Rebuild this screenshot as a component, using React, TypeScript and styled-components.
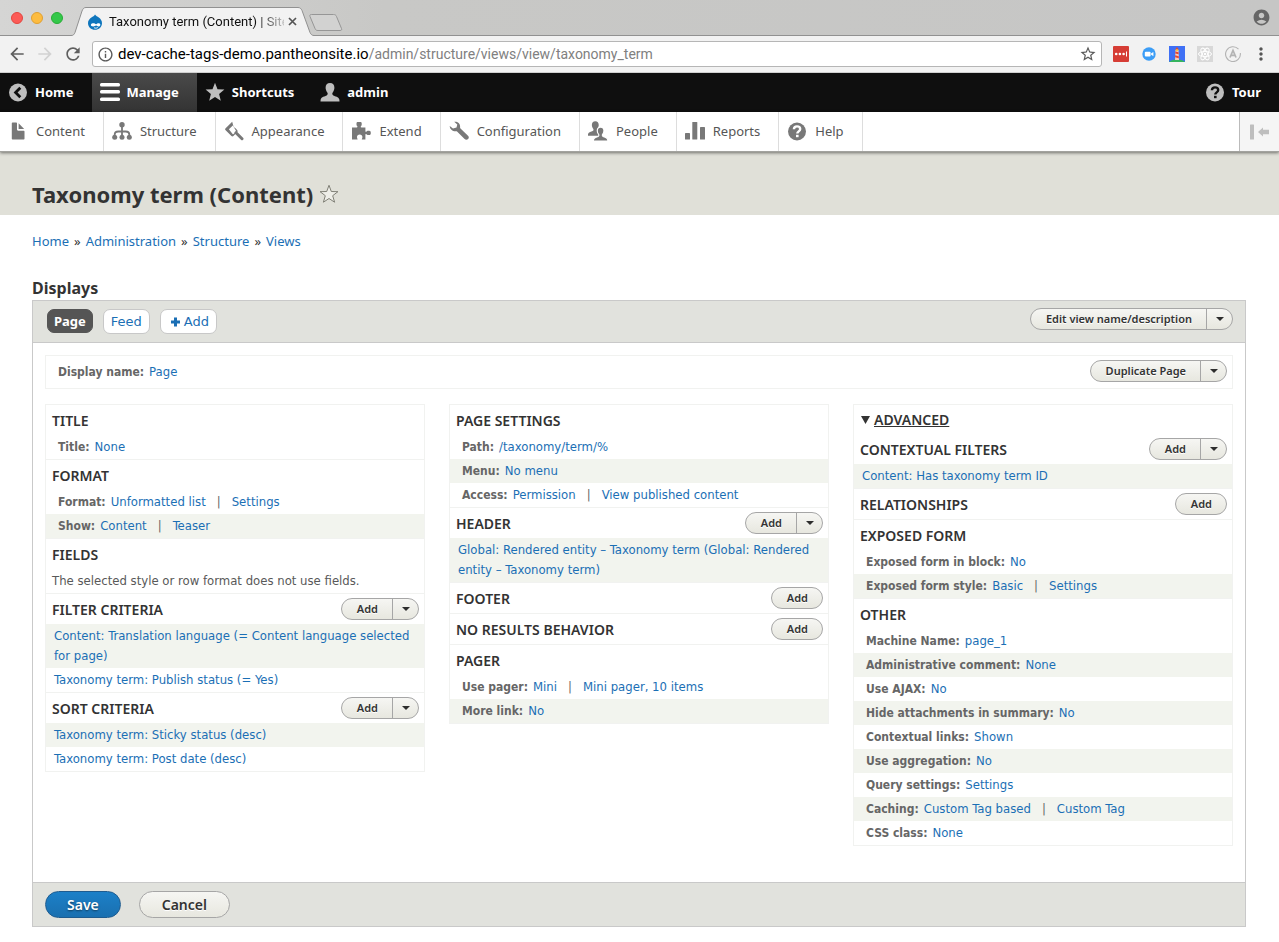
import React from 'react';
import styled, { createGlobalStyle, css } from 'styled-components';
import { MdArrowBack, MdArrowForward, MdRefresh, MdStarBorder, MdAccountCircle, MdMoreVert, MdInfoOutline } from 'react-icons/md';

const chromeFont = `Roboto, 'Liberation Sans', sans-serif`;
const uiFont = `'Noto Sans', 'Open Sans', sans-serif`;
const textFont = `'DejaVu Sans Condensed', 'DejaVu Sans', sans-serif`;
const wideFont = `'DejaVu Sans', sans-serif`;

const color = {
  link: '#1b6fb5',
  ink: '#333',
  label: '#666',
  bar: '#e1e2dd',
  line: '#c9c9c9',
  faint: '#f1f2f0',
  stripe: '#f2f4ee',
};

const GlobalStyle = createGlobalStyle`
  *, *::before, *::after { box-sizing: border-box; }
  body { margin: 0; background: #fff; color: ${color.ink}; font: 13px/20px ${textFont}; }
  a { color: ${color.link}; text-decoration: none; }
  button { font-family: inherit; cursor: pointer; }
  svg { display: block; flex: none; }
  h1, h2, h3, p, ul, ol { margin: 0; padding: 0; }
  ul, ol { list-style: none; }
`;

/* ---------- Browser frame ---------- */

const TabStrip = styled.div`
  display: flex;
  align-items: flex-end;
  height: 36px;
  padding: 0 10px 0 11px;
  background: linear-gradient(to right, #d5d5d4, #c8c8c6 30%, #c6c6c5);
  border-bottom: 1px solid #919191;
  font: 13px/16px ${chromeFont};
`;

const WindowDots = styled.div`
  display: flex;
  gap: 8px;
  align-self: center;
`;

const Dot = styled.span<{ $fill: string; $edge: string }>`
  width: 12px;
  height: 12px;
  border-radius: 50%;
  background: ${p => p.$fill};
  border: 1px solid ${p => p.$edge};
`;

const BrowserTab = styled.div`
  position: relative;
  display: flex;
  align-items: center;
  width: 244px;
  height: 29px;
  margin: 0 0 -1px 8px;
  padding: 0 14px 0 16px;
  color: #111;
`;

const TabShape = styled.svg`
  position: absolute;
  inset: 0;
`;

const TabTitle = styled.span`
  position: relative;
  flex: 1;
  margin-left: 6px;
  overflow: hidden;
  white-space: nowrap;
  mask-image: linear-gradient(to right, #000 148px, transparent 182px);
`;

const TabPart = styled.span`
  position: relative;
`;

const CloseTab = styled.button`
  position: relative;
  display: flex;
  padding: 4px;
  border: 0;
  background: none;
`;

const NewTab = styled.button`
  display: flex;
  margin: 0 auto 4px -6px;
  padding: 0;
  border: 0;
  background: none;
`;

const Profile = styled.button`
  align-self: center;
  display: flex;
  margin-right: -2px;
  padding: 0;
  border: 0;
  background: none;
  color: #666;
`;

const BrowserBar = styled.div`
  display: flex;
  align-items: center;
  height: 37px;
  padding: 0 4px 0 7px;
  background: #f2f2f2;
  border-bottom: 1px solid #cfcfcf;
`;

const NavButton = styled.button`
  display: flex;
  width: 28px;
  padding: 0;
  border: 0;
  background: none;
  color: #5f5f5f;
  &:disabled { color: #d2d2d2; }
`;

const Omnibox = styled.div`
  display: flex;
  flex: 1;
  align-items: center;
  gap: 4px;
  height: 26px;
  margin: 0 5px 0 1px;
  padding: 0 4px;
  border: 1px solid #b6b6b6;
  border-radius: 3px;
  background: #fff;
  color: #5a5a5a;
`;

const Address = styled.div`
  flex: 1;
  font: 14px/20px ${chromeFont};
  color: #808080;
  white-space: nowrap;
  b { font-size: 15px; font-weight: 400; color: #000; }
`;

const Extension = styled.button`
  display: flex;
  justify-content: center;
  width: 28px;
  padding: 0;
  border: 0;
  background: none;
  color: #555;
`;

/* ---------- Admin toolbar ---------- */

const AdminBar = styled.nav`
  display: flex;
  height: 39px;
  background: #0f0f0f;
`;

const BarLink = styled.a<{ $active?: boolean; $end?: boolean }>`
  display: flex;
  align-items: center;
  gap: 7px;
  padding: 0 18px 2px 8px;
  color: #fff;
  font: 700 13px/18px ${uiFont};
  ${p => p.$active && css`background: linear-gradient(#4a4a4a, #333);`}
  ${p => p.$end && css`margin-left: auto;`}
`;

const Tray = styled.nav`
  position: relative;
  display: flex;
  height: 40px;
  background: #fff;
  border-bottom: 1px solid #a2a29e;
  box-shadow: 0 1px 3px rgba(0, 0, 0, 0.5);
`;

const TrayLink = styled.a`
  display: flex;
  align-items: center;
  gap: 8px;
  padding: 0 18px 1px 8px;
  border-right: 1px solid #ddd;
  color: #565656;
  font: 13px/18px ${uiFont};
`;

const TrayToggle = styled.button`
  display: flex;
  align-items: center;
  justify-content: center;
  width: 40px;
  margin-left: auto;
  padding: 0;
  border: 0;
  border-left: 1px solid #bbb;
  background: #f5f5f5;
`;

/* ---------- Page ---------- */

const PageHeader = styled.header`
  display: flex;
  align-items: center;
  gap: 6px;
  height: 63px;
  padding: 20px 32px 0;
  background: #e0e0d8;
`;

const PageTitle = styled.h1`
  font: 700 22px/30px ${uiFont};
`;

const StarButton = styled.button`
  display: flex;
  padding: 0;
  border: 0;
  background: none;
`;

const Content = styled.main`
  padding: 16px 33px 15px 32px;
`;

const Breadcrumb = styled.nav`
  font: 13px/20px ${uiFont};
  ol { display: flex; }
  li + li::before { content: '»'; margin: 0 5px; }
`;

const DisplaysTitle = styled.h2`
  margin-top: 26px;
  font: 700 16px/23px ${uiFont};
`;

const Panel = styled.section`
  border: 1px solid ${color.line};
`;

const PanelBar = styled.div`
  display: flex;
  align-items: flex-start;
  gap: 10px;
  padding: 7px 12px 8px 14px;
  background: ${color.bar};
  border-bottom: 1px solid ${color.line};
`;

const DisplayTab = styled.a<{ $active?: boolean }>`
  display: flex;
  align-items: center;
  gap: 3px;
  margin-top: 1px;
  padding: 2px 7px 1px;
  border: 1px solid #c8c8c8;
  border-radius: 7px;
  background: #fff;
  font: 13px/20px ${wideFont};
  ${p => p.$active && css`
    padding: 1px 6px;
    border-color: #555;
    background: #555;
    color: #fff;
    font: 700 13px/20px ${uiFont};
  `}
`;

const PanelBody = styled.div`
  padding: 12px 12px 36px;
`;

const DisplayName = styled.div`
  display: flex;
  justify-content: space-between;
  align-items: flex-start;
  margin-bottom: 15px;
  padding: 4px 5px 6px 12px;
  border: 1px solid ${color.faint};
`;

const DisplayLabel = styled.div`
  padding-top: 2px;
`;

const Columns = styled.div`
  display: grid;
  grid-template-columns: repeat(3, 1fr);
  align-items: start;
  gap: 24px;
`;

const Column = styled.div`
  border: 1px solid ${color.faint};
`;

const Bucket = styled.section`
  & + & { border-top: 1px solid ${color.faint}; }
`;

const BucketHead = styled.div`
  display: flex;
  justify-content: space-between;
  align-items: flex-start;
  height: 30px;
  padding: 4px 5px 0 6px;
`;

const BucketTitle = styled.h3`
  padding-top: 2px;
  font: 600 14px/20px ${uiFont};
  text-transform: uppercase;
`;

const Line = styled.li<{ $striped?: boolean; $list?: boolean }>`
  padding: 2px 12px;
  ${p => p.$list && css`padding: 2px 8px;`}
  ${p => p.$striped && css`background: ${color.stripe};`}
`;

const Label = styled.span`
  margin-right: 5px;
  color: ${color.label};
  font: 700 12px/20px ${textFont};
`;

const Separator = styled.span`
  margin: 0 11px;
  color: ${color.label};
`;

const Note = styled.p`
  padding: 2px 6px;
  color: #595959;
`;

const Advanced = styled.details``;

const AdvancedTitle = styled.summary`
  display: flex;
  align-items: center;
  gap: 4px;
  height: 29px;
  padding: 1px 7px 0;
  list-style: none;
  cursor: pointer;
  font: 600 14px/20px ${uiFont};
  text-transform: uppercase;
  &::-webkit-details-marker { display: none; }
  span { text-decoration: underline; }
`;

/* ---------- Buttons ---------- */

const SplitButton = styled.div<{ $end?: boolean }>`
  display: flex;
  height: 22px;
  border: 1px solid #a6a6a6;
  border-radius: 11px;
  background: linear-gradient(#f6f6f3, #e7e7df);
  overflow: hidden;
  ${p => p.$end && css`margin-left: auto;`}
`;

const SplitMain = styled.button`
  padding: 0 14px 0 15px;
  border: 0;
  background: none;
  color: ${color.ink};
  font: 600 11px/20px ${uiFont};
  text-shadow: 0 1px #fff;
`;

const SplitMore = styled.button`
  display: flex;
  align-items: center;
  justify-content: center;
  width: 26px;
  padding: 0;
  border: 0;
  border-left: 1px solid #a6a6a6;
  background: none;
`;

const Actions = styled.div`
  display: flex;
  gap: 18px;
  padding: 8px 12px;
  background: ${color.bar};
  border-top: 1px solid ${color.line};
`;

const ActionButton = styled.button<{ $primary?: boolean }>`
  height: 27px;
  padding: 0 22px;
  border: 1px solid #a6a6a6;
  border-radius: 14px;
  background: linear-gradient(#f6f6f3, #e7e7df);
  color: ${color.ink};
  font: 600 14px/24px ${uiFont};
  text-shadow: 0 1px #fff;
  ${p => p.$primary && css`
    padding: 0 21px;
    border-color: #1e5c90;
    background: linear-gradient(#1c80c8, #1a70b0);
    color: #fff;
    text-shadow: 0 1px 2px rgba(0, 0, 0, 0.5);
  `}
`;

/* ---------- Icons ---------- */

const DrupalIcon = () => (
  <svg width="16" height="16" viewBox="0 0 16 16">
    <path d="M8 .5c1.200 1.600 2.300 1.900 3.800 3.100C13.600 5 15 6.700 15 9.200c0 3.800-3.100 6.500-7 6.500s-7-2.700-7-6.500C1 6.700 2.500 5 4.400 3.600 6 2.500 7.200 2 8 .5z" fill="#0f76bd" />
    <path d="M5.600 9.300c1.500-.3 2.500.5 3.500 1 .8-.6 1.700-1.200 2.800-1.100 1.300.1 1.700 1.200 1.300 2.300-.4 1-1.500 1.300-2.500.8-.6-.3-1.100-.7-1.600-.7-.8 0-1.600.9-2.900.9-1.500 0-2.400-.7-2.300-1.700.1-.8.800-1.300 1.700-1.500z" fill="#fff" />
    <path d="M7 13.700c1.100.7 2.700.6 3.800-.2" stroke="#fff" strokeWidth=".9" fill="none" />
  </svg>
);

const HomeIcon = () => (
  <svg width="20" height="20" viewBox="0 0 20 20">
    <circle cx="10" cy="10.500" r="9" fill="#bebebe" />
    <path d="M12.300 5.800 7.600 10.500l4.700 4.700" fill="none" stroke="#0f0f0f" strokeWidth="2.800" />
  </svg>
);

const MenuIcon = () => (
  <svg width="20" height="20" viewBox="0 0 20 20" fill="#fff">
    <rect y="1" width="20" height="3.600" rx="1.500" />
    <rect y="8" width="20" height="3.600" rx="1.500" />
    <rect y="15.500" width="20" height="3.600" rx="1.500" />
  </svg>
);

const StarIcon = () => (
  <svg width="20" height="20" viewBox="0 0 20 20">
    <path d="M10 .8l2.500 6.400 6.900.4-5.300 4.400 1.700 6.800L10 15l-5.800 3.800L5.900 12 .6 7.600l6.900-.4z" fill="#bebebe" />
  </svg>
);

const PersonShape = 'M10 1c2.900 0 4.400 2 4.400 4.700 0 1.900-.8 3.500-1.700 4.800-.7 1-.5 2.300.6 2.900 1.900 1 5.300 1.300 5.900 3.700.2.800.3 1.600.3 2.400H.5c0-.8.1-1.600.3-2.400.6-2.400 4-2.700 5.900-3.700 1.100-.6 1.300-1.900.6-2.900-.9-1.300-1.700-2.900-1.700-4.800C5.600 3 7.100 1 10 1z';

const PersonIcon = () => (
  <svg width="20" height="20" viewBox="0 0 20 20"><path d={PersonShape} fill="#bebebe" /></svg>
);

const HelpIcon = ({ fill, mark }: { fill: string; mark: string }) => (
  <svg width="20" height="20" viewBox="0 0 20 20">
    <circle cx="10" cy="10.500" r="9" fill={fill} />
    <path d="M6.900 8.300c.1-1.900 1.300-2.900 3.100-2.900s3.200 1 3.200 2.600c0 2.400-2.900 2.300-2.900 4.500" fill="none" stroke={mark} strokeWidth="2.400" />
    <rect x="9" y="13.800" width="2.600" height="2.400" fill={mark} />
  </svg>
);

const FileIcon = () => (
  <svg width="20" height="20" viewBox="0 0 20 20" fill="#787878">
    <path d="M4.500 1.500h3.800c.4 0 .7.300.7.700v6.300c0 .7.500 1.200 1.200 1.200h5.600c.4 0 .7.300.7.700v7.400c0 .4-.3.700-.7.700H4.500c-.4 0-.7-.3-.7-.7V2.200c0-.4.300-.7.700-.7z" />
    <path d="M10.600 2.200l5.600 5.800h-5.600z" />
  </svg>
);

const StructureIcon = () => (
  <svg width="20" height="20" viewBox="0 0 20 20">
    <g fill="#787878">
      <circle cx="10" cy="3.800" r="2.700" />
      <circle cx="2.700" cy="16.300" r="2.500" />
      <circle cx="10" cy="16.300" r="2.500" />
      <circle cx="17.300" cy="16.300" r="2.500" />
    </g>
    <path d="M10 4v12M2.700 16v-2.500c0-2.300 1.500-3 3.600-3h7.400c2.100 0 3.600.7 3.600 3V16" fill="none" stroke="#787878" strokeWidth="1.800" />
  </svg>
);

const AppearanceIcon = () => (
  <svg width="20" height="20" viewBox="0 0 20 20">
    <path d="M8.200.8 1.400 7.400c-.5.500-.5 1 0 1.500l6 6.100c.7.700 1.400.6 2 0l3.900-4c.5-.5.5-1.100 0-1.700l-1.500-1.700L9.600 6z" fill="#787878" />
    <path d="M8.800 4.600 4.900 8.300l3.700 4.600c.4.400.9.300 1.300-.1l2-2c.4-.4.300-.9-.1-1.300z" fill="#fff" />
    <path d="M12 11.700l6 6" stroke="#787878" strokeWidth="3" strokeLinecap="round" />
  </svg>
);

const ExtendIcon = () => (
  <svg width="20" height="20" viewBox="0 0 20 20" fill="#787878">
    <path d="M1 6.400h4.800c.6 0 .8-.4.600-.9-.3-.5-.9-1-.9-1.700V2.200C5.500 1.400 6.100 1 6.900 1h2.400c.8 0 1.400.4 1.400 1.200v1.600c0 .7-.6 1.200-.9 1.700-.2.500 0 .9.600.9h4v3.800c0 .7.500.8 1 .5.500-.4.900-.9 1.700-.9h1.100c1.200 0 1.600.7 1.600 2.100s-.4 2.200-1.600 2.200h-1.100c-.8 0-1.200-.5-1.700-.9-.5-.3-1-.2-1 .5v4.800h-3.600c0-.9.600-1.300.6-2.600 0-1.500-1.100-2.500-2.700-2.500s-2.700 1-2.700 2.500c0 1.300.6 1.700.6 2.600H1z" />
  </svg>
);

const WrenchIcon = () => (
  <svg width="20" height="20" viewBox="0 0 20 20" fill="#787878">
    <path d="M5.200.8c3.200-.5 6 1.600 5.900 4.900 0 .8-.1 1.300.4 1.800l7.500 7.200c1 1 1.100 2.400.1 3.400s-2.500 1-3.500 0l-7.300-7.400c-.5-.5-1-.4-1.800-.4C3.500 10.300.8 8 .7 4.900L4 7.400l3.500-.9.800-3.100z" />
  </svg>
);

const PeopleIcon = () => (
  <svg width="20" height="20" viewBox="0 0 20 20">
    <path d={PersonShape} fill="#787878" transform="translate(-.5 -.5) scale(.78)" />
    <path d={PersonShape} fill="#787878" stroke="#fff" strokeWidth="1.500" transform="translate(5 5.300) scale(.76)" />
  </svg>
);

const ReportsIcon = () => (
  <svg width="20" height="20" viewBox="0 0 20 20" fill="#787878">
    <rect y="12" width="5" height="6.500" rx=".6" />
    <rect x="7.300" y="1" width="5" height="17.500" rx=".6" />
    <rect x="15" y="6" width="5" height="12.500" rx=".6" />
  </svg>
);

const Caret = () => (
  <svg width="8" height="4" viewBox="0 0 8 4"><path d="M0 0h8L4 4z" fill="#2d2d2d" /></svg>
);

/* ---------- Data ---------- */

type Item = { label?: string; links: string[] };
type Group = { title: string; add?: 'single' | 'split'; note?: string; items?: Item[]; stripeFirst?: boolean };

const firstColumn: Group[] = [
  { title: 'Title', items: [{ label: 'Title:', links: ['None'] }] },
  { title: 'Format', items: [
    { label: 'Format:', links: ['Unformatted list', 'Settings'] },
    { label: 'Show:', links: ['Content', 'Teaser'] },
  ] },
  { title: 'Fields', note: 'The selected style or row format does not use fields.' },
  { title: 'Filter criteria', add: 'split', stripeFirst: true, items: [
    { links: ['Content: Translation language (= Content language selected for page)'] },
    { links: ['Taxonomy term: Publish status (= Yes)'] },
  ] },
  { title: 'Sort criteria', add: 'split', stripeFirst: true, items: [
    { links: ['Taxonomy term: Sticky status (desc)'] },
    { links: ['Taxonomy term: Post date (desc)'] },
  ] },
];

const secondColumn: Group[] = [
  { title: 'Page settings', items: [
    { label: 'Path:', links: ['/taxonomy/term/%'] },
    { label: 'Menu:', links: ['No menu'] },
    { label: 'Access:', links: ['Permission', 'View published content'] },
  ] },
  { title: 'Header', add: 'split', stripeFirst: true, items: [
    { links: ['Global: Rendered entity – Taxonomy term (Global: Rendered entity – Taxonomy term)'] },
  ] },
  { title: 'Footer', add: 'single' },
  { title: 'No results behavior', add: 'single' },
  { title: 'Pager', items: [
    { label: 'Use pager:', links: ['Mini', 'Mini pager, 10 items'] },
    { label: 'More link:', links: ['No'] },
  ] },
];

const advancedColumn: Group[] = [
  { title: 'Contextual filters', add: 'split', stripeFirst: true, items: [{ links: ['Content: Has taxonomy term ID'] }] },
  { title: 'Relationships', add: 'single' },
  { title: 'Exposed form', items: [
    { label: 'Exposed form in block:', links: ['No'] },
    { label: 'Exposed form style:', links: ['Basic', 'Settings'] },
  ] },
  { title: 'Other', items: [
    { label: 'Machine Name:', links: ['page_1'] },
    { label: 'Administrative comment:', links: ['None'] },
    { label: 'Use AJAX:', links: ['No'] },
    { label: 'Hide attachments in summary:', links: ['No'] },
    { label: 'Contextual links:', links: ['Shown'] },
    { label: 'Use aggregation:', links: ['No'] },
    { label: 'Query settings:', links: ['Settings'] },
    { label: 'Caching:', links: ['Custom Tag based', 'Custom Tag'] },
    { label: 'CSS class:', links: ['None'] },
  ] },
];

const trayItems: [string, React.ReactNode][] = [
  ['Content', <FileIcon />],
  ['Structure', <StructureIcon />],
  ['Appearance', <AppearanceIcon />],
  ['Extend', <ExtendIcon />],
  ['Configuration', <WrenchIcon />],
  ['People', <PeopleIcon />],
  ['Reports', <ReportsIcon />],
  ['Help', <HelpIcon fill="#787878" mark="#fff" />],
];

function DropButton({ text, more = true, end }: { text: string; more?: boolean; end?: boolean }) {
  return (
    <SplitButton $end={end}>
      <SplitMain type="button">{text}</SplitMain>
      {more && <SplitMore type="button" aria-label="More actions"><Caret /></SplitMore>}
    </SplitButton>
  );
}

function Groups({ groups }: { groups: Group[] }) {
  return (
    <>
      {groups.map(g => (
        <Bucket key={g.title}>
          <BucketHead>
            <BucketTitle>{g.title}</BucketTitle>
            {g.add && <DropButton text="Add" more={g.add === 'split'} />}
          </BucketHead>
          {g.note && <Note>{g.note}</Note>}
          {g.items && (
            <ul>
              {g.items.map((item, i) => (
                <Line key={i} $list={!item.label} $striped={i % 2 === (g.stripeFirst ? 0 : 1)}>
                  {item.label && <Label>{item.label}</Label>}
                  {item.links.map((text, j) => (
                    <React.Fragment key={text}>
                      {j > 0 && <Separator>|</Separator>}
                      <a href="#">{text}</a>
                    </React.Fragment>
                  ))}
                </Line>
              ))}
            </ul>
          )}
        </Bucket>
      ))}
    </>
  );
}

function Browser() {
  return (
    <>
      <TabStrip>
        <WindowDots>
          <Dot $fill="#fc5b57" $edge="#e2463f" />
          <Dot $fill="#fdbc40" $edge="#e0a032" />
          <Dot $fill="#34c84a" $edge="#28ac36" />
        </WindowDots>
        <BrowserTab>
          <TabShape width="244" height="29" viewBox="0 0 244 29">
            <path d="M0 28.500c2.500 0 3-1 4-3L11 4c1-2.500 2-3.500 4-3.500h212c2 0 3 1 4 3l8 22c1 2 2 3 4 3V29H0z" fill="#f2f2f2" />
            <path d="M0 28.500c2.500 0 3-1 4-3L11 4c1-2.500 2-3.500 4-3.500h212c2 0 3 1 4 3l8 22c1 2 2 3 4 3" fill="none" stroke="#919191" />
          </TabShape>
          <TabPart><DrupalIcon /></TabPart>
          <TabTitle>Taxonomy term (Content) | Site</TabTitle>
          <CloseTab type="button" aria-label="Close tab">
            <svg width="9" height="9" viewBox="0 0 9 9"><path d="M1 1l7 7M8 1L1 8" stroke="#555" strokeWidth="1.700" /></svg>
          </CloseTab>
        </BrowserTab>
        <NewTab type="button" aria-label="New tab">
          <svg width="34" height="17" viewBox="0 0 34 17">
            <path d="M2.500.5h22c1.500 0 2.500.5 3 2l5 12c.5 1.300 0 2-1.500 2H9c-1.500 0-2.500-.5-3-2l-5-12C.5 1 1 .5 2.500.5z" fill="#d2d2d1" stroke="#969696" />
          </svg>
        </NewTab>
        <Profile type="button" aria-label="Profile"><MdAccountCircle size={19} /></Profile>
      </TabStrip>
      <BrowserBar>
        <NavButton type="button" aria-label="Back"><MdArrowBack size={20} /></NavButton>
        <NavButton type="button" aria-label="Forward" disabled><MdArrowForward size={20} /></NavButton>
        <NavButton type="button" aria-label="Reload"><MdRefresh size={20} /></NavButton>
        <Omnibox>
          <MdInfoOutline size={17} />
          <Address><b>dev-cache-tags-demo.pantheonsite.io</b>/admin/structure/views/view/taxonomy_term</Address>
          <MdStarBorder size={18} />
        </Omnibox>
        <Extension type="button" aria-label="Password manager">
          <svg width="16" height="16" viewBox="0 0 16 16">
            <rect width="16" height="16" rx="1" fill="#d63d35" />
            <circle cx="3.200" cy="8" r="1.300" fill="#fff" /><circle cx="6.900" cy="8" r="1.300" fill="#fff" /><circle cx="10.600" cy="8" r="1.300" fill="#fff" />
            <rect x="13" y="5.500" width="1" height="5" fill="#fff" />
          </svg>
        </Extension>
        <Extension type="button" aria-label="Video call">
          <svg width="14" height="14" viewBox="0 0 14 14">
            <circle cx="7" cy="7" r="6.700" fill="#3c9df6" />
            <rect x="2.800" y="4.700" width="5.800" height="4.700" rx="1" fill="#fff" /><path d="M9 6.500l2.400-1.600v4.300L9 7.600z" fill="#fff" />
          </svg>
        </Extension>
        <Extension type="button" aria-label="Lighthouse">
          <svg width="16" height="16" viewBox="0 0 16 16">
            <rect width="16" height="16" fill="#3f70f5" />
            <path d="M0 16c2-2 5-2.500 8-2.500s6 .5 8 2.500z" fill="#35b45e" />
            <path d="M6.500 4h3l.5 10H6z" fill="#f6c9b8" />
            <path d="M6.400 5.500l3.200.8v2L6.300 7.500zM6.200 9.300l3.600 1v2l-3.700-1.100zM6.200 3.800 8 1l1.800 2.800z" fill="#e8452f" />
            <rect x="6.700" y="3.300" width="2.600" height="1.700" fill="#f9c63c" />
          </svg>
        </Extension>
        <Extension type="button" aria-label="React tools">
          <svg width="16" height="16" viewBox="0 0 16 16">
            <rect width="16" height="16" fill="#d8d8d8" />
            <g fill="none" stroke="#fff" strokeWidth="1">
              <ellipse cx="8" cy="8" rx="6.500" ry="2.600" />
              <ellipse cx="8" cy="8" rx="6.500" ry="2.600" transform="rotate(60 8 8)" />
              <ellipse cx="8" cy="8" rx="6.500" ry="2.600" transform="rotate(120 8 8)" />
            </g>
            <circle cx="8" cy="8" r="1.200" fill="#fff" />
          </svg>
        </Extension>
        <Extension type="button" aria-label="Apollo tools">
          <svg width="16" height="16" viewBox="0 0 16 16" fill="none" stroke="#b3b3b3">
            <path d="M13.500 3.200A7.400 7.400 0 1 0 15.300 7" strokeWidth="1.100" />
            <path d="M5 11.500 8 4.500l3 7M6.200 9.300h3.600" strokeWidth="1.700" />
          </svg>
        </Extension>
        <Extension type="button" aria-label="Browser menu"><MdMoreVert size={20} /></Extension>
      </BrowserBar>
    </>
  );
}

export default function App() {
  return (
    <>
      <GlobalStyle />
      <Browser />
      <AdminBar aria-label="Administration">
        <BarLink href="#"><HomeIcon />Home</BarLink>
        <BarLink href="#" $active><MenuIcon />Manage</BarLink>
        <BarLink href="#"><StarIcon />Shortcuts</BarLink>
        <BarLink href="#"><PersonIcon />admin</BarLink>
        <BarLink href="#" $end><HelpIcon fill="#bebebe" mark="#0f0f0f" />Tour</BarLink>
      </AdminBar>
      <Tray aria-label="Manage">
        {trayItems.map(([text, icon]) => <TrayLink href="#" key={text}>{icon}{text}</TrayLink>)}
        <TrayToggle type="button" aria-label="Vertical orientation">
          <svg width="20" height="16" viewBox="0 0 20 16" fill="#bebebe">
            <rect y=".5" width="4" height="15" rx=".5" />
            <path d="M8 8l5-4.500v2.300h6v4.400h-6v2.300z" />
          </svg>
        </TrayToggle>
      </Tray>
      <PageHeader>
        <PageTitle>Taxonomy term (Content)</PageTitle>
        <StarButton type="button" aria-label="Add to shortcuts">
          <svg width="20" height="20" viewBox="0 0 20 20">
            <path d="M10 1.300l2.300 6.200 6.600.2-5.200 4 1.900 6.500L10 14.500l-5.600 3.700 1.900-6.500-5.200-4 6.600-.2z" fill="#eeeee8" stroke="#74746a" strokeWidth=".9" />
          </svg>
        </StarButton>
      </PageHeader>
      <Content>
        <Breadcrumb aria-label="Breadcrumb">
          <ol>
            {['Home', 'Administration', 'Structure', 'Views'].map(t => <li key={t}><a href="#">{t}</a></li>)}
          </ol>
        </Breadcrumb>
        <DisplaysTitle>Displays</DisplaysTitle>
        <Panel>
          <PanelBar>
            <DisplayTab href="#" $active>Page</DisplayTab>
            <DisplayTab href="#">Feed</DisplayTab>
            <DisplayTab href="#">
              <svg width="13" height="10" viewBox="0 0 13 10"><path d="M7.500 .5v9M3 5h9" stroke="#1b6fb5" strokeWidth="3" /></svg>
              Add
            </DisplayTab>
            <DropButton text="Edit view name/description" end />
          </PanelBar>
          <PanelBody>
            <DisplayName>
              <DisplayLabel><Label>Display name:</Label><a href="#">Page</a></DisplayLabel>
              <DropButton text="Duplicate Page" />
            </DisplayName>
            <Columns>
              <Column><Groups groups={firstColumn} /></Column>
              <Column><Groups groups={secondColumn} /></Column>
              <Column>
                <Advanced open>
                  <AdvancedTitle>
                    <svg width="9" height="8" viewBox="0 0 9 8"><path d="M0 0h9L4.500 8z" fill="#333" /></svg>
                    <span>Advanced</span>
                  </AdvancedTitle>
                  <Groups groups={advancedColumn} />
                </Advanced>
              </Column>
            </Columns>
          </PanelBody>
          <Actions>
            <ActionButton type="submit" $primary>Save</ActionButton>
            <ActionButton type="button">Cancel</ActionButton>
          </Actions>
        </Panel>
      </Content>
    </>
  );
}
